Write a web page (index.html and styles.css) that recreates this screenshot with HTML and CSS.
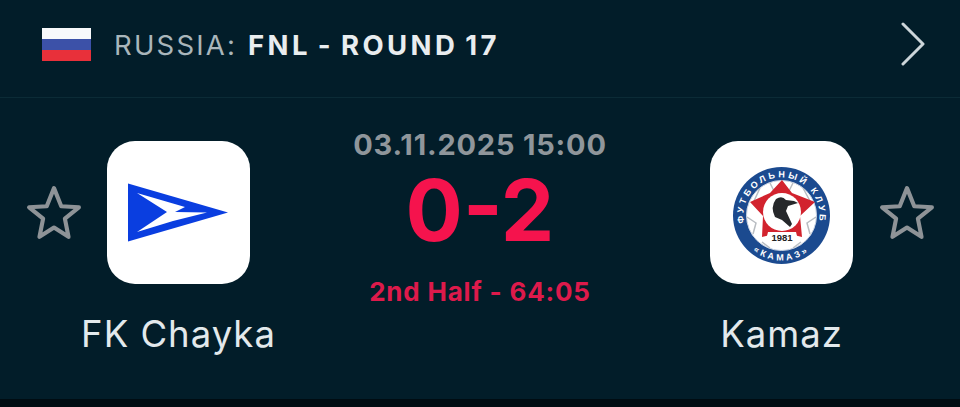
FILE: index.html
```html
<!DOCTYPE html>
<html>
  <head>
    <meta charset="utf-8" />
    <title>FK Chayka - Kamaz</title>
    <link rel="stylesheet" href="styles.css">
  </head>

  <body>
    <div class="card">
      <div class="league">
        <svg class="flag" viewBox="0 0 49 33">
          <rect width="49" height="11" fill="#f8f9fb" />
          <rect y="11" width="49" height="11" fill="#3c51a8" />
          <rect y="22" width="49" height="11" fill="#e8303a" />
        </svg>
        <div class="league_name">RUSSIA: <b>FNL - ROUND 17</b></div>
        <svg class="chevron" viewBox="0 0 25 44">
          <path d="M2 2 L22 22 L2 42" fill="none" stroke="#cdd6da" stroke-width="3" stroke-linecap="round" stroke-linejoin="round" />
        </svg>
      </div>

      <div class="match">
        <div class="star_box">
          <svg class="star" viewBox="0 0 54 54">
            <path d="M27 3 L34 20.500 L51 21.500 L37.500 32.500 L41 50 L27 41 L13 50 L16.500 32.500 L3 21.500 L20 20.500 Z" fill="none" stroke="#8e9397" stroke-width="4" stroke-linejoin="round" />
          </svg>
        </div>

        <div class="team">
          <div class="tile">
            <svg class="logo" viewBox="0 0 143 143">
              <path d="M21 42.500 L121 71.500 L21 100.500 Z" fill="#0a3ee0" />
              <path d="M30 52 L78 66 L68 71 L100 71.500 L66 80 L30 91 L60 71 Z" fill="#fff" />
            </svg>
          </div>
          <div class="team_name">FK Chayka</div>
        </div>

        <div class="center">
          <div class="date">03.11.2025 15:00</div>
          <div class="score">0-2</div>
          <div class="status">2nd Half - 64:05</div>
        </div>

        <div class="team">
          <div class="tile">
            <svg class="logo" viewBox="0 0 143 143">
              <circle cx="71.500" cy="74.500" r="48.500" fill="#1b4a8f" />
              <circle cx="71.500" cy="74.500" r="35" fill="#fff" stroke="#c9d3e2" />
              <!-- ball seams -->
              <path d="M50 47 L44 60 M93 47 L100 60 M37 76 L46 82 L43 93 M106 76 L97 82 L100 93 M60 42 L64 50 M83 42 L79 50 M52 101 L60 107 M91 101 L83 107" fill="none" stroke="#b9bdc2" stroke-width="1.500" />
              <path d="M72 39 L82 52 L105 61 L90 75 L92 96 L72 91 L52 96 L53 75 L40 61 L60 52 Z" fill="#d2232e" />
              <circle cx="72" cy="71" r="19" fill="#fff" />
              <path d="M66 58 Q72 54 76 59 L84 60 L88 62 L78 65 L76 70 L82 83 L80 86 L72 79 L65 76 Q60 66 66 58 Z" fill="#26282b" />
              <path d="M58 91 L86 91 L88 99 Q72 104 56 99 Z" fill="#fff" />
              <text class="crest_year" x="72" y="100" text-anchor="middle">1981</text>
              <path id="crest_top" d="M38.600 93.500 A38 38 0 1 1 104.400 93.500" fill="none" />
              <path id="crest_bottom" d="M39.700 106.300 A45 45 0 0 0 103.300 106.300" fill="none" />
              <text class="crest_text"><textPath href="#crest_top" startOffset="50%" text-anchor="middle">ФУТБОЛЬНЫЙ КЛУБ</textPath></text>
              <text class="crest_text"><textPath href="#crest_bottom" startOffset="50%" text-anchor="middle">«КАМАЗ»</textPath></text>
            </svg>
          </div>
          <div class="team_name">Kamaz</div>
        </div>

        <div class="star_box">
          <svg class="star" viewBox="0 0 54 54">
            <path d="M27 3 L34 20.500 L51 21.500 L37.500 32.500 L41 50 L27 41 L13 50 L16.500 32.500 L3 21.500 L20 20.500 Z" fill="none" stroke="#8e9397" stroke-width="4" stroke-linejoin="round" />
          </svg>
        </div>
      </div>
    </div>
  </body>
</html>
```

FILE: styles.css
```css
html,
body {
  margin: 0;
  padding: 0;
  height: 100%;
  background: #000c12;
  overflow: hidden;
  font-family: Inter, "Liberation Sans", sans-serif;
}
.card {
  height: 399px;
  background: #021d29;
}
.league {
  display: flex;
  align-items: center;
  height: 98px;
  padding: 0 34px 0 42px;
  box-sizing: border-box;
  border-bottom: 1px solid #0b2b36;
}
.flag {
  width: 49px;
  height: 33px;
  margin-top: -8px;
}
.league_name {
  flex: 1;
  margin: -8px 0 0 23px;
  font-size: 27.5px;
  letter-spacing: 2.2px;
  word-spacing: 1px;
  color: #a9b6bb;
}
.league_name b {
  font-weight: 700;
  letter-spacing: 3.4px;
  word-spacing: -3px;
  color: #e9edef;
}
.chevron {
  width: 25px;
  height: 44px;
  margin-top: -10px;
}
.match {
  display: grid;
  grid-template-columns: 53px 197px 1fr 197px 53px;
  padding: 43px 27px 0;
}
.star_box {
  display: flex;
  align-items: center;
  justify-content: center;
  height: 143px;
}
.star {
  flex: none;
  width: 56px;
  height: 56px;
}
.team {
  display: flex;
  flex-direction: column;
  align-items: center;
}
.tile {
  width: 143px;
  height: 143px;
  border-radius: 28px;
  background: #fff;
}
.logo {
  display: block;
  width: 143px;
  height: 143px;
}
.crest_text {
  font-family: "Liberation Sans", sans-serif;
  font-size: 9px;
  font-weight: 700;
  letter-spacing: 2.8px;
  fill: #fff;
}
.crest_year {
  font-family: "Liberation Sans", sans-serif;
  font-size: 9.5px;
  font-weight: 700;
  fill: #222;
}
.team_name {
  margin-top: 29px;
  font-size: 36.5px;
  line-height: 42px;
  letter-spacing: 1px;
  color: #e3e9ec;
}
.center {
  display: flex;
  flex-direction: column;
  align-items: center;
}
.date {
  margin-top: -13px;
  font-size: 29px;
  line-height: 34px;
  font-weight: 700;
  letter-spacing: 0.8px;
  color: #8f969b;
}
.score {
  margin-top: 14px;
  font-size: 85px;
  line-height: 70px;
  font-weight: 700;
  color: #f5134d;
}
.status {
  margin-top: 30px;
  font-size: 26px;
  line-height: 32px;
  font-weight: 700;
  letter-spacing: 0.8px;
  color: #dd1a4b;
}
```
